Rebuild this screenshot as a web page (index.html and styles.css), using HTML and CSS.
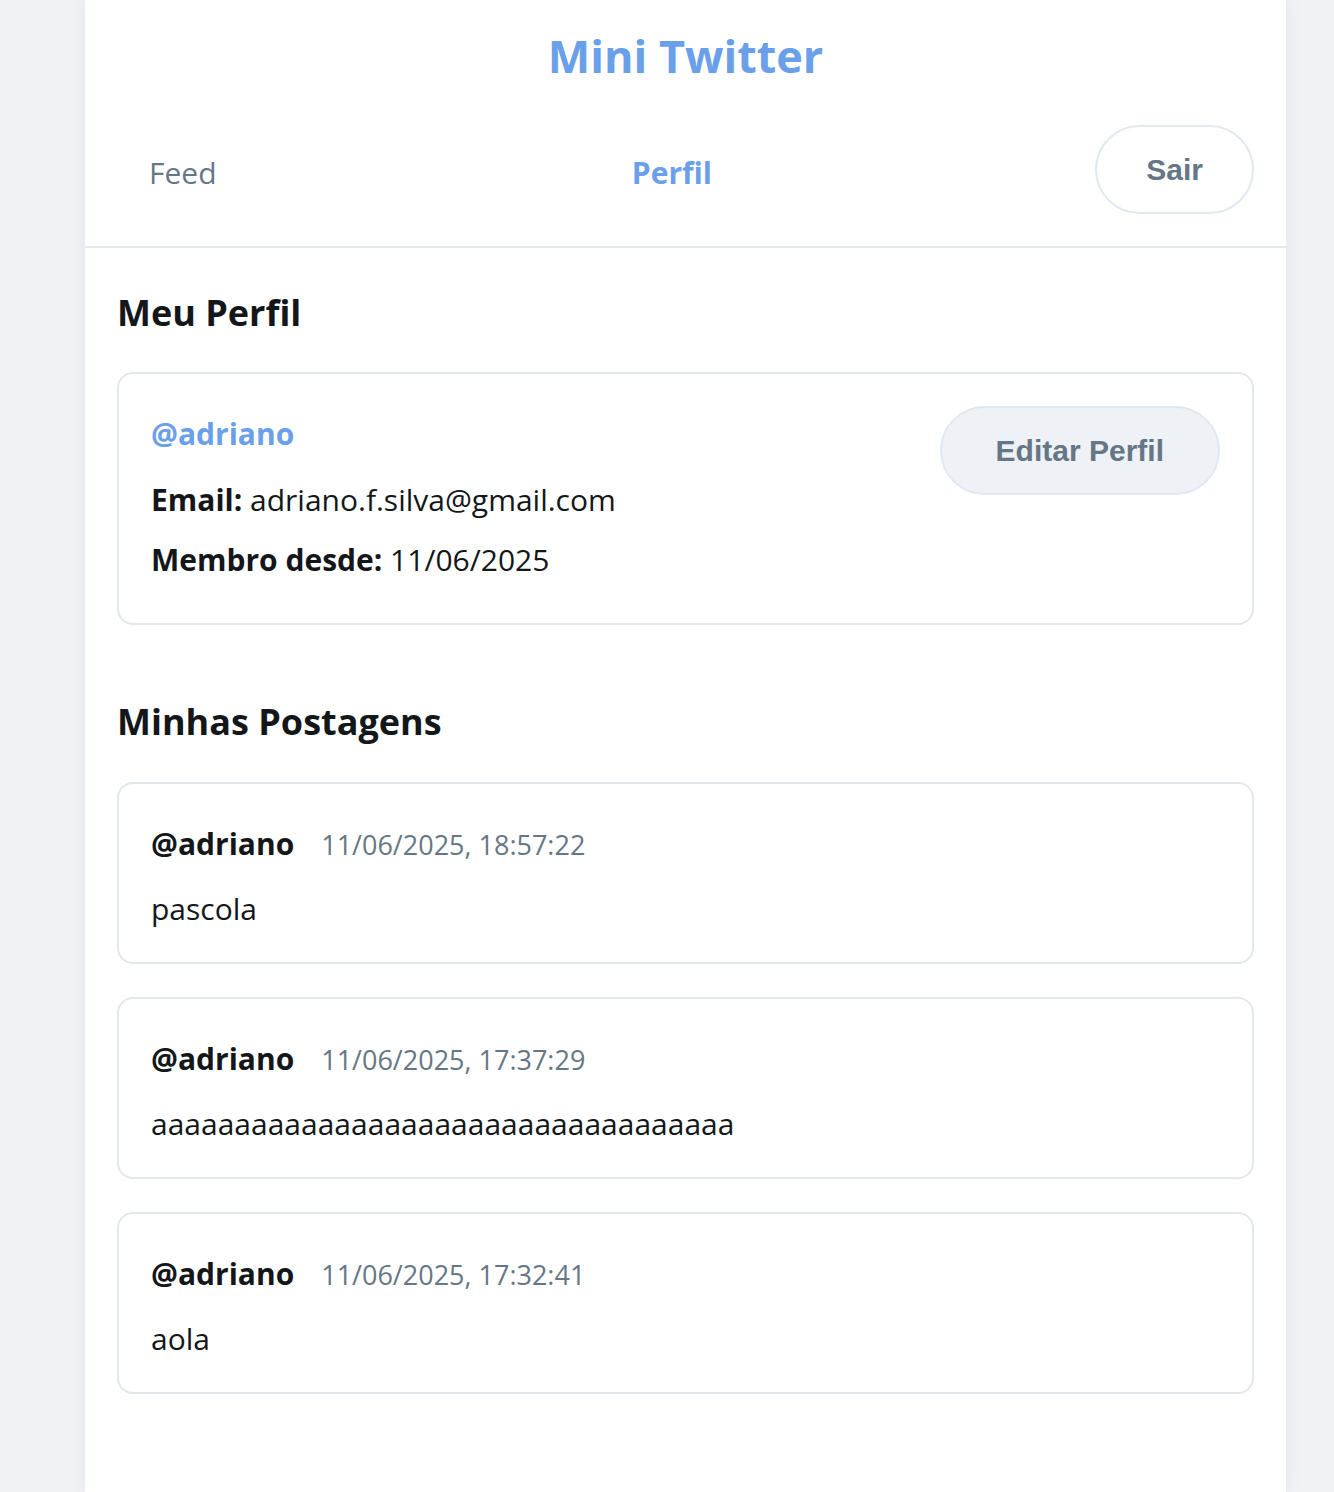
FILE: index.html
```html
<!DOCTYPE html>
<html lang="pt-BR">
<head>
<meta charset="utf-8">
<title>Mini Twitter</title>
<link rel="stylesheet" href="styles.css">
</head>
<body>
<div class="page">
  <div class="container">
    <header class="header">
      <h1 class="logo">Mini Twitter</h1>
      <nav class="nav">
        <a class="nav-link" href="#">Feed</a>
        <a class="nav-link active" href="#">Perfil</a>
        <button class="btn-outline">Sair</button>
      </nav>
    </header>
    <main class="main">
      <h2 class="section-title">Meu Perfil</h2>
      <section class="card profile">
        <div class="profile-info">
          <div class="handle">@adriano</div>
          <p class="info"><strong>Email:</strong> adriano.f.silva@gmail.com</p>
          <p class="info"><strong>Membro desde:</strong> 11/06/2025</p>
        </div>
        <button class="btn-soft">Editar Perfil</button>
      </section>

      <h2 class="section-title posts-title">Minhas Postagens</h2>
      <div class="posts">
        <article class="card post">
          <div class="post-head"><span class="author">@adriano</span><span class="date">11/06/2025, 18:57:22</span></div>
          <p class="post-text">pascola</p>
        </article>
        <article class="card post">
          <div class="post-head"><span class="author">@adriano</span><span class="date">11/06/2025, 17:37:29</span></div>
          <p class="post-text">aaaaaaaaaaaaaaaaaaaaaaaaaaaaaaaaaaa</p>
        </article>
        <article class="card post">
          <div class="post-head"><span class="author">@adriano</span><span class="date">11/06/2025, 17:32:41</span></div>
          <p class="post-text">aola</p>
        </article>
      </div>
    </main>
  </div>
</div>
</body>
</html>
```
FILE: styles.css
```css
* { box-sizing: border-box; }
html, body { margin: 0; padding: 0; }
body {
  background: #f0f2f5;
  font-family: "Open Sans", "Noto Sans", sans-serif;
  color: #14171a;
}
.page {
  padding: 0 48px 0 85px;
}
.container {
  background: #ffffff;
  min-height: 1492px;
  box-shadow: 0 0 18px rgba(0, 0, 0, 0.06);
}
.header {
  padding: 26px 32px 32px;
  border-bottom: 2px solid #e4e7eb;
}
.logo {
  margin: 0;
  text-align: center;
  font-size: 45px;
  line-height: 60px;
  font-weight: 700;
  color: #6aa0ea;
}
.nav {
  margin-top: 39px;
  display: flex;
  justify-content: space-between;
  align-items: center;
}
.nav-link {
  padding: 12px 32px 6px;
  font-size: 30px;
  text-decoration: none;
  color: #657786;
}
.nav-link.active {
  color: #6aa0ea;
  font-weight: 700;
}
.btn-outline {
  font-family: "Liberation Sans", Arial, sans-serif;
  font-weight: 700;
  font-size: 30px;
  line-height: 37px;
  color: #657786;
  background: #ffffff;
  border: 2px solid #e2e8f0;
  border-radius: 999px;
  padding: 24px 49px;
}
.main {
  padding: 41px 32px 60px;
}
.section-title {
  margin: 0 0 35px;
  font-size: 36px;
  line-height: 48px;
  font-weight: 700;
}
.posts-title {
  margin-top: 73px;
  margin-bottom: 36px;
}
.card {
  border: 2px solid #e3e7ec;
  border-radius: 16px;
  padding: 32px;
  background: #fff;
}
.profile {
  display: flex;
  justify-content: space-between;
  align-items: flex-start;
  padding-bottom: 43px;
}
.handle {
  margin-top: 8px;
  color: #6aa0ea;
  font-weight: 700;
  font-size: 30px;
  line-height: 40px;
}
.info {
  margin: 20px 0 0;
  font-size: 30px;
  line-height: 40px;
}
.handle + .info {
  margin-top: 26px;
}
.btn-soft {
  font-family: "Liberation Sans", Arial, sans-serif;
  font-weight: 700;
  font-size: 30px;
  line-height: 37px;
  color: #657786;
  background: #eef1f5;
  border: 2px solid #e2e8f0;
  border-radius: 999px;
  padding: 24px 54px;
}
.posts {
  display: flex;
  flex-direction: column;
  gap: 33px;
}
.post {
  padding-top: 38px;
  padding-bottom: 31px;
}
.post-head {
  display: flex;
  align-items: baseline;
  gap: 27px;
  line-height: 44px;
}
.author {
  font-weight: 700;
  font-size: 30px;
}
.date {
  font-size: 27px;
  color: #657786;
}
.post-text {
  margin: 20px 0 0;
  font-size: 30px;
  line-height: 44px;
}
```
